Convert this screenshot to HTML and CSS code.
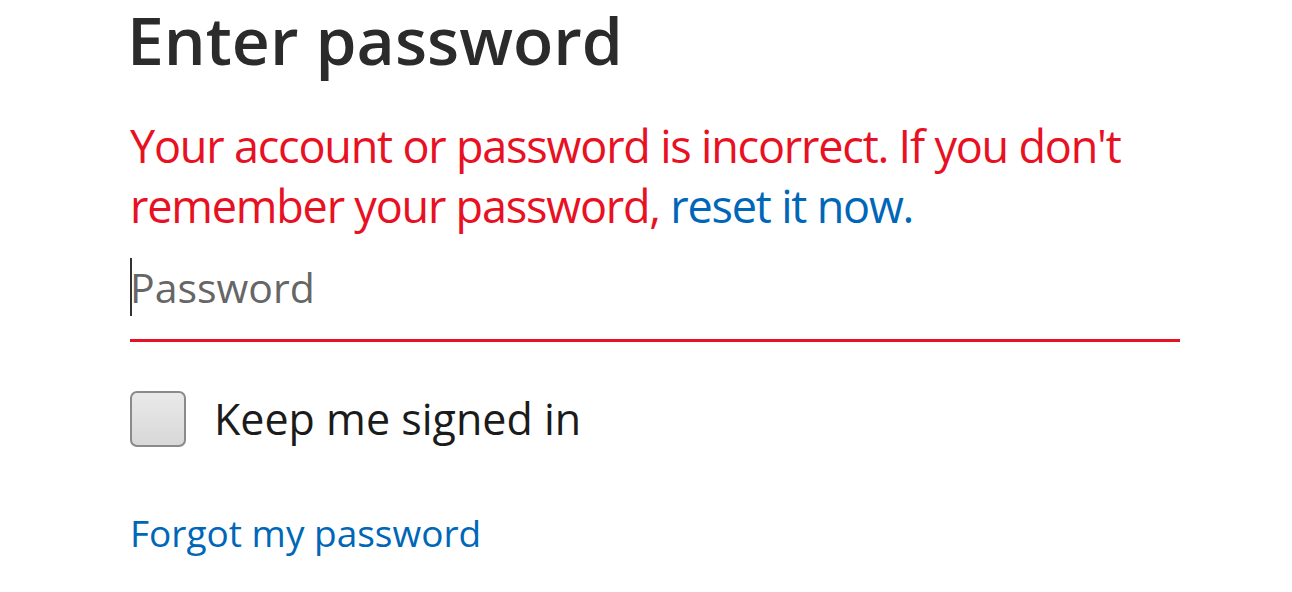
FILE: index.html
```html
<!DOCTYPE html>
<html lang="en">
<head>
<meta charset="utf-8">
<title>Enter password</title>
<link rel="stylesheet" href="styles.css">
</head>
<body>
<main class="form">
  <h1 class="title">Enter password</h1>
  <p class="error">Your account or password is incorrect. If you don't remember your password, <a class="link" href="#">reset it now.</a></p>
  <div class="field">
    <span class="caret"></span>
    <input class="input" type="password" placeholder="Password">
  </div>
  <label class="keep">
    <span class="box"></span>
    <span class="keep-text">Keep me signed in</span>
  </label>
  <a class="forgot" href="#">Forgot my password</a>
</main>
</body>
</html>
```
FILE: styles.css
```css
html, body {
  margin: 0;
  padding: 0;
  background: #fff;
}
body {
  font-family: "Open Sans", "Noto Sans", sans-serif;
  color: #1b1b1b;
}
.form {
  width: 1050px;
  padding-left: 130px;
  display: flex;
  flex-direction: column;
  align-items: flex-start;
}
.title {
  margin: 0 0 0 -3px;
  font-size: 66px;
  font-weight: 600;
  line-height: 78px;
  color: #2b2b2b;
}
.error {
  margin: 38px 0 0 0;
  font-size: 45px;
  letter-spacing: -1.2px;
  line-height: 60px;
  color: #e81123;
  width: 1040px;
}
.link {
  color: #0067b8;
  text-decoration: none;
}
.field {
  position: relative;
  width: 1050px;
  margin-top: 14px;
  border-bottom: 3px solid #e81123;
}
.caret {
  position: absolute;
  left: 0;
  top: 8px;
  width: 2px;
  height: 58px;
  background: #333;
}
.input {
  display: block;
  box-sizing: border-box;
  width: 100%;
  border: 0;
  outline: 0;
  padding: 0 0 15px 0;
  height: 89px;
  font-family: inherit;
  font-size: 41px;
  color: #333;
  background: transparent;
}
.input::placeholder {
  color: #666;
}
.keep {
  display: flex;
  align-items: center;
  gap: 28px;
  margin-top: 49px;
}
.box {
  width: 52px;
  height: 52px;
  border: 2px solid #8a8a8a;
  border-radius: 7px;
  background: linear-gradient(#e9e9e9, #d8d8d8);
}
.keep-text {
  font-size: 43px;
  line-height: 56px;
  color: #1b1b1b;
}
.forgot {
  margin-top: 58px;
  font-size: 37px;
  line-height: 56px;
  color: #0067b8;
  text-decoration: none;
}
```
